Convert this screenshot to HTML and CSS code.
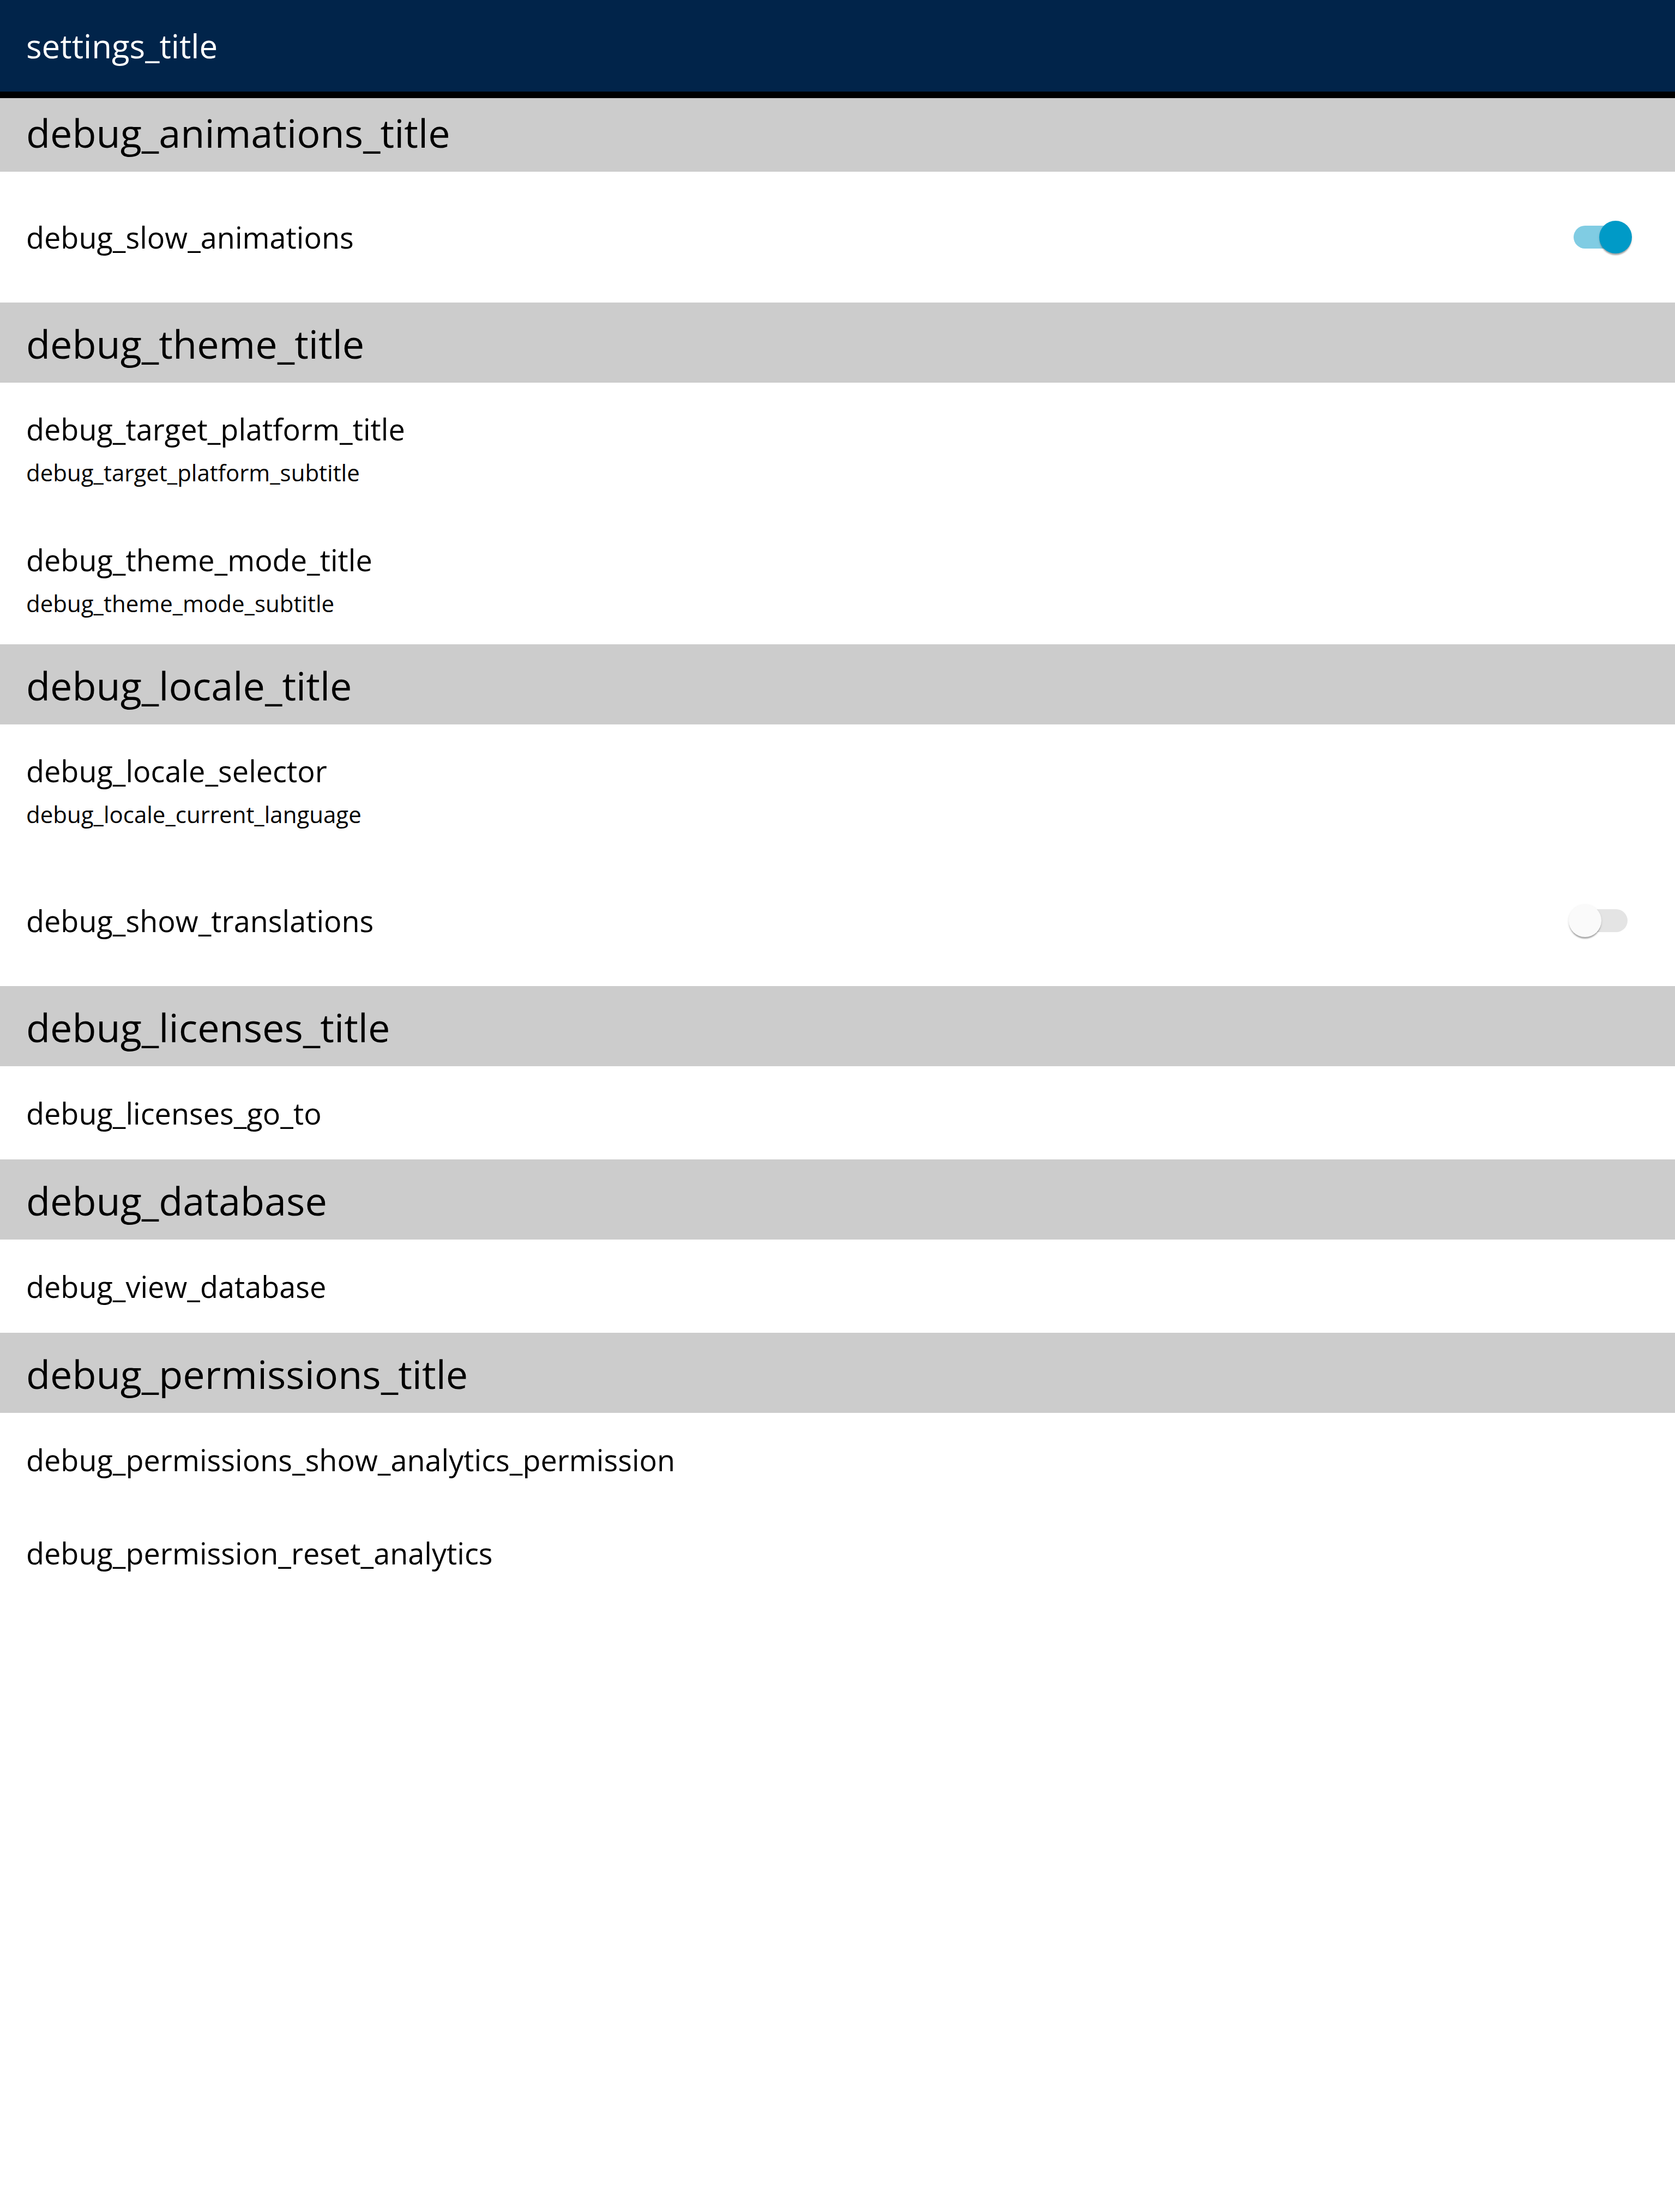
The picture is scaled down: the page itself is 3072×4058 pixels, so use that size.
FILE: index.html
```html
<!DOCTYPE html>
<html lang="en">
<head>
<meta charset="utf-8">
<title>settings_title</title>
<link rel="stylesheet" href="styles.css">
</head>
<body>
<header class="appbar">
  <h1 class="appbar-title">settings_title</h1>
</header>
<main class="list">
  <section>
    <h2 class="section-head first">debug_animations_title</h2>
    <div class="tile tile-tall">
      <span class="tile-title">debug_slow_animations</span>
      <span class="switch on"><span class="thumb"></span></span>
    </div>
  </section>
  <section>
    <h2 class="section-head">debug_theme_title</h2>
    <div class="tile tile-two">
      <span class="tile-title">debug_target_platform_title</span>
      <span class="tile-sub">debug_target_platform_subtitle</span>
    </div>
    <div class="tile tile-two">
      <span class="tile-title">debug_theme_mode_title</span>
      <span class="tile-sub">debug_theme_mode_subtitle</span>
    </div>
  </section>
  <section>
    <h2 class="section-head">debug_locale_title</h2>
    <div class="tile tile-two">
      <span class="tile-title">debug_locale_selector</span>
      <span class="tile-sub">debug_locale_current_language</span>
    </div>
    <div class="tile tile-tall">
      <span class="tile-title">debug_show_translations</span>
      <span class="switch off"><span class="thumb"></span></span>
    </div>
  </section>
  <section>
    <h2 class="section-head">debug_licenses_title</h2>
    <div class="tile tile-one">
      <span class="tile-title">debug_licenses_go_to</span>
    </div>
  </section>
  <section>
    <h2 class="section-head">debug_database</h2>
    <div class="tile tile-one">
      <span class="tile-title">debug_view_database</span>
    </div>
  </section>
  <section>
    <h2 class="section-head">debug_permissions_title</h2>
    <div class="tile tile-one">
      <span class="tile-title">debug_permissions_show_analytics_permission</span>
    </div>
    <div class="tile tile-one">
      <span class="tile-title">debug_permission_reset_analytics</span>
    </div>
  </section>
</main>
</body>
</html>
```
FILE: styles.css
```css
* { box-sizing: border-box; }
html, body {
  margin: 0;
  padding: 0;
  background: #ffffff;
  font-family: "Open Sans", "Noto Sans", sans-serif;
  color: #000000;
}

.appbar {
  position: relative;
  z-index: 2;
  height: 168px;
  background: #01244a;
  display: flex;
  align-items: center;
  padding: 0 48px;
}
.appbar::after {
  content: "";
  position: absolute;
  left: 0;
  right: 0;
  bottom: -12px;
  height: 12px;
  background: #000000;
}
.appbar-title {
  margin: 0;
  font-size: 60px;
  font-weight: 400;
  color: #ffffff;
  line-height: 82px;
}

.list { display: flex; flex-direction: column; }
section { display: flex; flex-direction: column; }

.section-head {
  margin: 0;
  height: 147px;
  background: #cccccc;
  display: flex;
  align-items: center;
  padding: 3px 48px 0;
  font-size: 72px;
  font-weight: 400;
  line-height: 98px;
}

.tile {
  display: flex;
  padding: 0 48px;
}
.tile-title {
  font-size: 54px;
  line-height: 74px;
  white-space: nowrap;
}
.tile-sub {
  font-size: 42px;
  line-height: 58px;
  margin-top: 14px;
  white-space: nowrap;
}
.tile-tall {
  height: 240px;
  align-items: center;
  justify-content: space-between;
}
.tile-one {
  height: 171px;
  align-items: center;
}
.tile-two {
  height: 240px;
  flex-direction: column;
  padding-top: 48px;
}

.switch {
  position: relative;
  width: 99px;
  height: 42px;
  border-radius: 21px;
  margin-right: 39px;
  flex: none;
}
.switch .thumb {
  position: absolute;
  top: -9px;
  width: 60px;
  height: 60px;
  border-radius: 50%;
  box-shadow: 0 4px 2px -1px rgba(0, 0, 0, 0.28), 0 2px 4px rgba(0, 0, 0, 0.12);
}
.switch.on { background: #80cce3; }
.switch.on .thumb { left: 47px; background: #009ac7; }
.switch.off { background: #e4e4e4; }
.switch.off .thumb { left: -9px; background: #fafafa; }
```
